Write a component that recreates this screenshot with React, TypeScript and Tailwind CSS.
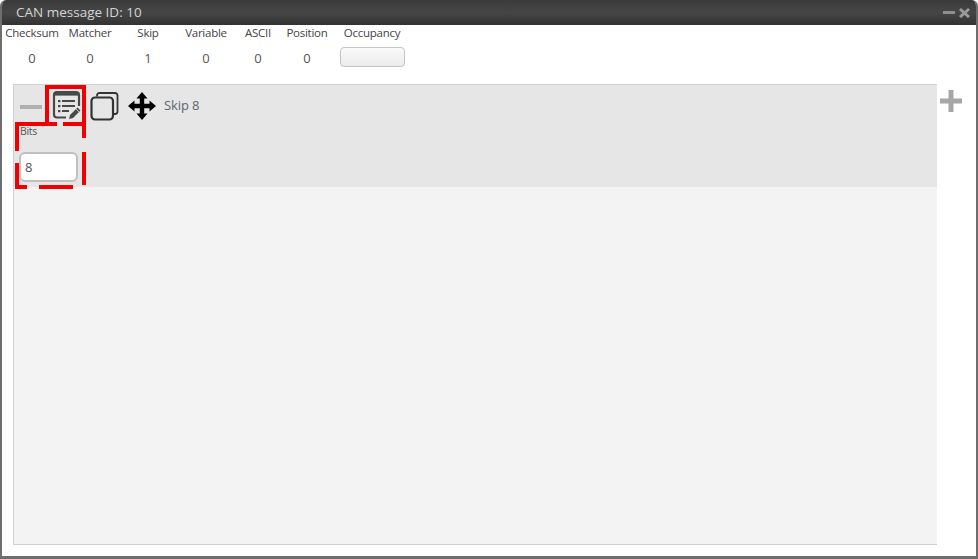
import React from "react";

const cols = [
  { label: "Checksum", value: "0", w: "w-[58px]" },
  { label: "Matcher", value: "0", w: "w-[58px]" },
  { label: "Skip", value: "1", w: "w-[58px]" },
  { label: "Variable", value: "0", w: "w-[58px]" },
  { label: "ASCII", value: "0", w: "w-[46px]" },
  { label: "Position", value: "0", w: "w-[52px]" },
];

function ListEdit() {
  return (
    <svg width="32" height="32" viewBox="0 0 32 32" className="shrink-0">
      <path d="M15 27.500H6a3 3 0 0 1-3-3V5a3 3 0 0 1 3-3h19a3 3 0 0 1 3 3v11" fill="none" stroke="#484848" strokeWidth="2.200" />
      <rect x="3" y="2" width="25" height="3.600" fill="#484848" />
      <g fill="#484848">
        <rect x="7" y="10" width="2.400" height="2.200" />
        <rect x="7" y="15" width="2.400" height="2.200" />
        <rect x="7" y="20" width="2.400" height="2.200" />
        <rect x="11" y="10" width="13" height="2" />
        <rect x="11" y="15" width="13" height="2" />
        <rect x="11" y="20" width="7" height="2" />
      </g>
      <path d="M18 29l1-4 7.500-7.500 3 3-7.500 7.500z" fill="#484848" />
      <path d="M25 19l3 3" stroke="#e6e6e6" strokeWidth="0.800" />
    </svg>
  );
}

function CopyIcon() {
  return (
    <svg width="29" height="29" viewBox="0 0 29 29" className="shrink-0">
      <path d="M7 4.500V3.500a2.500 2.500 0 0 1 2.500-2.500h15.500A2.500 2.500 0 0 1 27.500 3.500v16a2.500 2.500 0 0 1-2.500 2.500h-1" fill="none" stroke="#333" strokeWidth="1.800" />
      <rect x="1.500" y="5.500" width="21.500" height="22" rx="3.500" fill="none" stroke="#333" strokeWidth="2.200" />
    </svg>
  );
}

function MoveIcon() {
  return (
    <svg width="28" height="28" viewBox="0 0 28 28" className="shrink-0" fill="#000">
      <path d="M14 0L19.500 6.500H16.200V11.800H21.500V8.500L28 14L21.500 19.500V16.200H16.200V21.500H19.500L14 28L8.500 21.500H11.800V16.200H6.500V19.500L0 14L6.500 8.500V11.800H11.800V6.500H8.500Z" />
    </svg>
  );
}

function RedMarks() {
  const bars: [number, number, number, number][] = [
    [45, 85, 41, 4],
    [45, 85, 4, 37],
    [82, 85, 4, 53],
    [15, 122, 42, 4],
    [63, 122, 23, 4],
    [15, 122, 4, 29],
    [15, 163, 4, 26],
    [82, 152, 4, 33],
    [15, 185, 12, 4],
    [39, 185, 34, 4],
  ];
  return (
    <svg width="978" height="559" className="absolute left-0 top-0 pointer-events-none">
      {bars.map(([x, y, w, h], i) => (
        <rect key={i} x={x} y={y} width={w} height={h} fill="#f00000" />
      ))}
    </svg>
  );
}

export default function App() {
  return (
    <div className="relative w-[978px] h-[559px] bg-white overflow-hidden font-['Open_Sans',_sans-serif]">
      <div className="w-full h-full flex flex-col border-x-2 border-b-[3px] border-x-[#6e6e6e] border-b-[#6e6e6e] rounded-t-[6px] overflow-hidden bg-white">
        <div className="h-[25px] shrink-0 flex items-center justify-between pl-[14px] pr-[5px] bg-gradient-to-b from-[#3a3a3a] via-[#464646] to-[#333333]">
          <span className="text-[13.5px] text-[#d4d4d4] leading-none">CAN message ID: 10</span>
          <div className="flex items-center gap-[3px]">
            <svg width="13" height="11" viewBox="0 0 13 11"><rect x="1" y="4" width="12" height="3" fill="#8e8e8e" /></svg>
            <svg width="13" height="11" viewBox="0 0 13 11"><path d="M2 2l9 8M11 2l-9 8" stroke="#9a9a9a" strokeWidth="3" /></svg>
          </div>
        </div>

        <div className="h-[59px] shrink-0 flex pl-[1px]">
          {cols.map((c) => (
            <div key={c.label} className={`${c.w} flex flex-col items-center`}>
              <span className="text-[11.5px] tracking-[-0.25px] leading-[16px] text-[#444] whitespace-nowrap">{c.label}</span>
              <span className="mt-[8px] text-[13px] leading-[18px] text-[#555]">{c.value}</span>
            </div>
          ))}
          <div className="w-[78px] flex flex-col items-center">
            <span className="text-[11.5px] tracking-[-0.25px] leading-[16px] text-[#444]">Occupancy</span>
            <div className="mt-[6px] w-[65px] h-[20px] rounded-[4px] border border-[#c4c4c4] bg-gradient-to-b from-[#fafafa] to-[#ececec]" />
          </div>
        </div>

        <div className="flex-1 flex items-start pl-[11px] pb-[11px] h-0">
          <div className="w-[924px] h-full flex flex-col border border-[#d0d0d0] border-r-0 bg-[#f3f3f3]">
            <div className="h-[102px] shrink-0 bg-[#e6e6e6] pl-[6px] pt-[5px] flex flex-col">
              <div className="h-[32px] flex items-center">
                <div className="w-[22px] h-[4px] bg-[#b0b0b0] mr-[9px] mt-[2px]" />
                <ListEdit />
                <div className="w-[7px]" />
                <CopyIcon />
                <div className="w-[9px]" />
                <MoveIcon />
                <span className="ml-[8px] text-[13px] tracking-[-0.1px] text-[#5b6670]">Skip 8</span>
              </div>
              <span className="text-[10.500px] leading-[12px] tracking-[-0.3px] text-[#555] mt-[3px]">Bits</span>
              <div className="mt-[15px] -ml-[1px] w-[59px] h-[30px] rounded-[6px] border-2 border-[#c0c0c0] bg-white flex items-center pl-[4px] pt-[1px] text-[13px] text-[#555]">8</div>
            </div>
          </div>
          <svg width="22" height="22" viewBox="0 0 22 22" className="ml-[3px] mt-[6px] shrink-0">
            <path d="M8.500 0h5v8.500H22v5h-8.500V22h-5v-8.500H0v-5h8.500z" fill="#a6a6a6" />
          </svg>
        </div>
      </div>
      <RedMarks />
    </div>
  );
}
